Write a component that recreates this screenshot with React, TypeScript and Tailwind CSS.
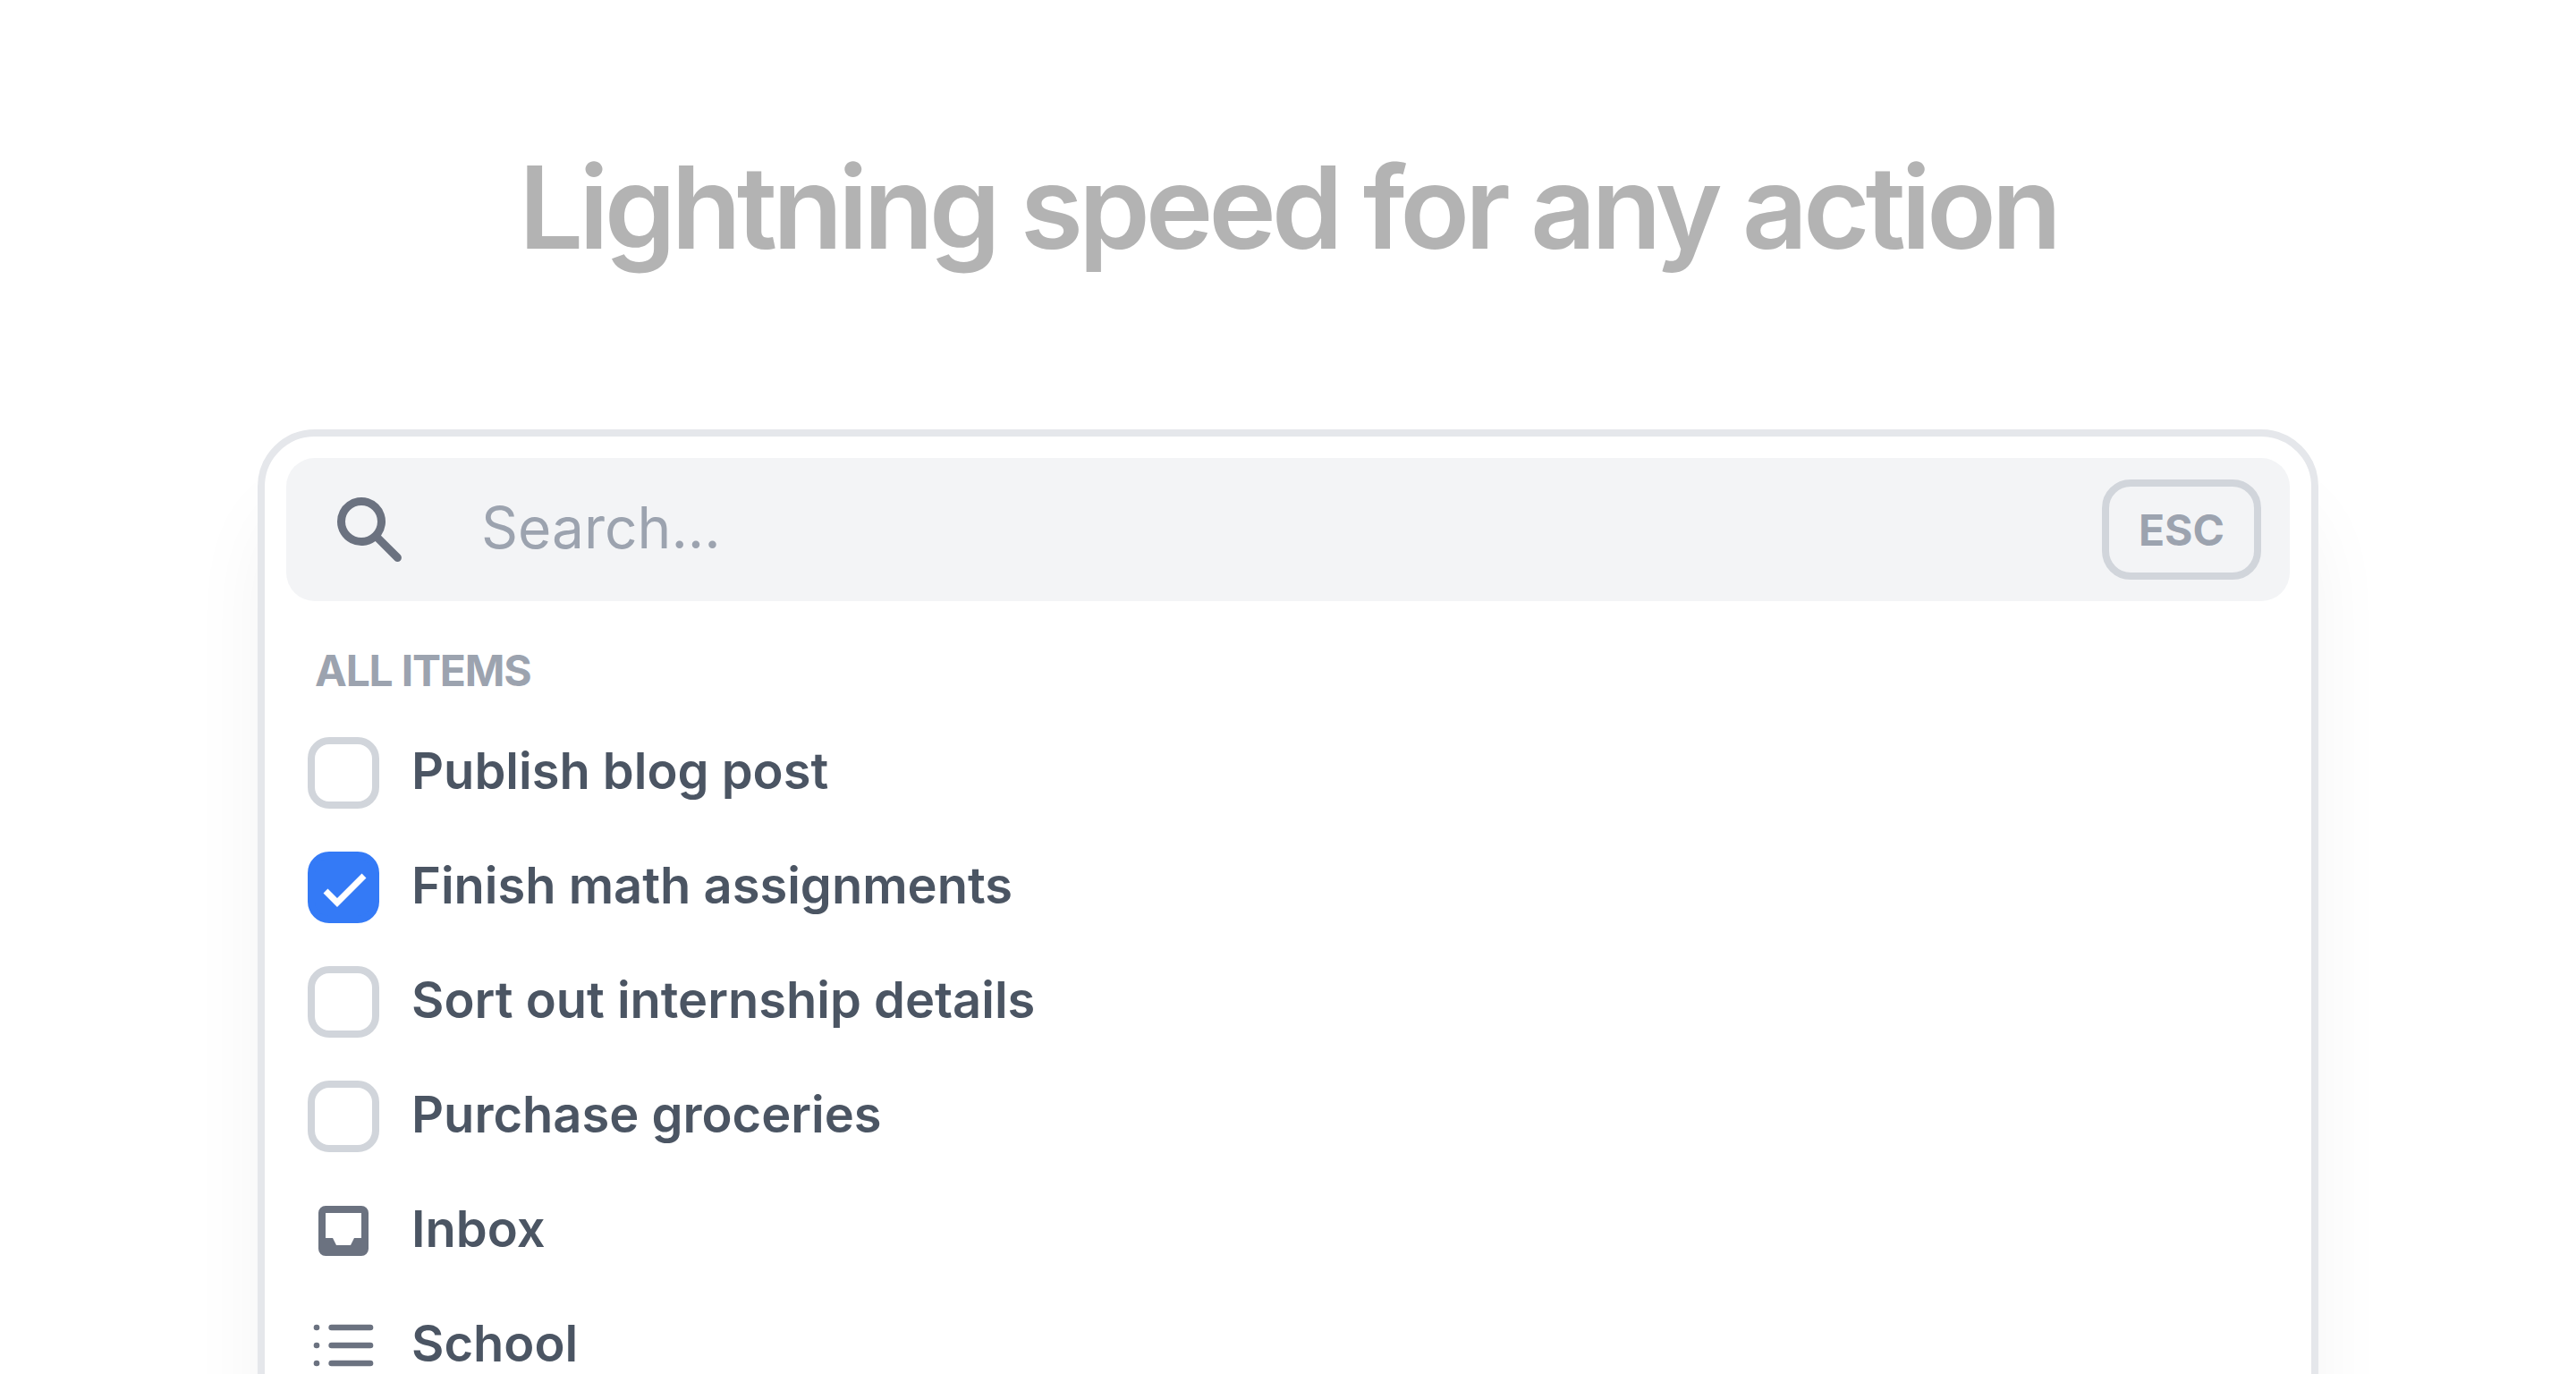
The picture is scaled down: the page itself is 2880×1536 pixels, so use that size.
import { useState } from 'react'

interface Task {
  id: string
  title: string
  done: boolean
}

const initialTasks: Task[] = [
  { id: 'blog', title: 'Publish blog post', done: false },
  { id: 'math', title: 'Finish math assignments', done: true },
  { id: 'internship', title: 'Sort out internship details', done: false },
  { id: 'groceries', title: 'Purchase groceries', done: false },
]

function SearchIcon() {
  return (
    <svg className="size-[90px] shrink-0 text-[#6b7280]" viewBox="0 0 20 20" fill="currentColor" aria-hidden="true">
      <path
        fillRule="evenodd"
        clipRule="evenodd"
        d="M8 4a4 4 0 100 8 4 4 0 000-8zM2 8a6 6 0 1110.89 3.476l4.817 4.817a1 1 0 01-1.414 1.414l-4.816-4.816A6 6 0 012 8z"
      />
    </svg>
  )
}

function InboxIcon() {
  return (
    <svg className="size-20 shrink-0 text-[#6b7280]" viewBox="0 0 20 20" fill="currentColor" aria-hidden="true">
      <path
        fillRule="evenodd"
        clipRule="evenodd"
        d="M5 3a2 2 0 00-2 2v10a2 2 0 002 2h10a2 2 0 002-2V5a2 2 0 00-2-2H5zm0 2h10v7h-2l-1 2H8l-1-2H5V5z"
      />
    </svg>
  )
}

function ListIcon() {
  return (
    <svg
      className="size-20 shrink-0 text-[#6b7280]"
      viewBox="0 0 24 24"
      fill="none"
      stroke="currentColor"
      strokeWidth="2"
      strokeLinecap="round"
      strokeLinejoin="round"
      aria-hidden="true"
    >
      <path d="M8 6h13M8 12h13M8 18h13M3 6h.01M3 12h.01M3 18h.01" />
    </svg>
  )
}

function TaskRow({ task, onToggle }: { task: Task; onToggle: () => void }) {
  return (
    <li>
      <label htmlFor={task.id} className="flex items-center gap-9">
        <span className="grid size-20 shrink-0">
          <input
            id={task.id}
            type="checkbox"
            checked={task.done}
            onChange={onToggle}
            className="col-start-1 row-start-1 size-20 appearance-none rounded-3xl border-8 border-[#d1d5db] checked:border-[#347af6] checked:bg-[#347af6]"
          />
          {task.done && (
            <svg
              className="pointer-events-none col-start-1 row-start-1 size-20 text-white"
              viewBox="0 0 80 80"
              fill="none"
              stroke="currentColor"
              strokeWidth="7"
              aria-hidden="true"
            >
              <path d="M20 44l13 13 30-30" />
            </svg>
          )}
        </span>
        <span className="pb-1">{task.title}</span>
      </label>
    </li>
  )
}

export default function App() {
  const [tasks, setTasks] = useState(initialTasks)
  const [query, setQuery] = useState('')

  const toggle = (id: string) => {
    setTasks(tasks.map((t) => (t.id === id ? { ...t, done: !t.done } : t)))
  }

  return (
    <main className="h-screen overflow-hidden bg-white px-[10%] pt-40 font-['Inter',sans-serif]">
      <h1 className="text-center text-[128px] leading-[144px] font-semibold tracking-[-0.04em] text-[#b3b3b3]">
        Lightning speed for any action
      </h1>

      <section className="mt-44 rounded-[64px] border-8 border-[#e5e7eb] bg-white p-6 pb-40 shadow-[0_80px_100px_-20px_rgba(0,0,0,0.07)]">
        <div className="flex h-40 items-center rounded-4xl bg-[#f3f4f6] pr-8 pl-12">
          <SearchIcon />
          <input
            type="text"
            aria-label="Search"
            placeholder="Search..."
            value={query}
            onChange={(e) => setQuery(e.target.value)}
            className="ml-20 min-w-0 flex-1 bg-transparent pb-1 text-[64px] leading-[96px] text-[#4b5563] outline-none placeholder:text-[#9ca3af]"
          />
          <button
            type="button"
            onClick={() => setQuery('')}
            className="h-28 w-[178px] rounded-4xl border-8 border-[#d1d5db] pt-0.5 text-5xl font-bold text-[#9ca3af]"
          >
            ESC
          </button>
        </div>

        <h2 className="mt-12 px-8 text-5xl leading-[60px] font-bold tracking-tight text-[#9ca3af]">ALL ITEMS</h2>

        <ul className="mt-11 flex flex-col gap-12 px-6 text-[56px] leading-[64px] font-semibold text-[#4b5563]">
          {tasks.map((task) => (
            <TaskRow key={task.id} task={task} onToggle={() => toggle(task.id)} />
          ))}
          <li>
            <a href="#inbox" className="flex items-center gap-9">
              <InboxIcon />
              <span className="pb-1">Inbox</span>
            </a>
          </li>
          <li>
            <a href="#school" className="flex items-center gap-9">
              <ListIcon />
              <span className="pb-1">School</span>
            </a>
          </li>
        </ul>
      </section>
    </main>
  )
}
